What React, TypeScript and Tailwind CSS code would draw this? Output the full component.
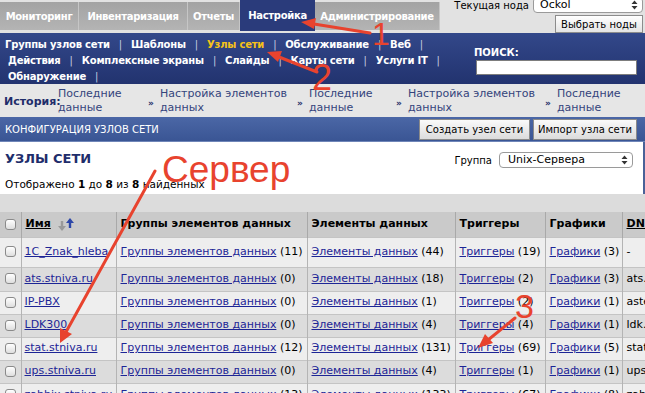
const tabs = [
  { label: 'Мониторинг', w: 'w-[79px]', active: false },
  { label: 'Инвентаризация', w: 'w-[109px]', active: false },
  { label: 'Отчеты', w: 'w-[52px]', active: false },
  { label: 'Настройка', w: 'w-[75px]', active: true },
  { label: 'Администрирование', w: 'w-[125px]', active: false },
];

const menuRows = [
  { pad: 'pl-0', items: ['Группы узлов сети', 'Шаблоны', 'Узлы сети', 'Обслуживание', 'Веб'] },
  { pad: 'pl-[3px]', items: ['Действия', 'Комплексные экраны', 'Слайды', 'Карты сети', 'Услуги IT'] },
  { pad: 'pl-[3px]', items: ['Обнаружение'] },
];

const crumbs = [
  { text: 'Последние данные', w: 'w-[90px]', first: true },
  { text: 'Настройка элементов данных', w: 'w-[149px]', first: false },
  { text: 'Последние данные', w: 'w-[99px]', first: false },
  { text: 'Настройка элементов данных', w: 'w-[149px]', first: false },
  { text: 'Последние данные', w: 'w-[90px]', first: false },
];

const hosts = [
  { name: '1C_Znak_hleba', g: 11, i: 44, t: 19, gr: 3, dns: '-', h: 'h-[30px]' },
  { name: 'ats.stniva.ru', g: 0, i: 18, t: 2, gr: 3, dns: 'ats.stniva.ru', h: 'h-[24px]' },
  { name: 'IP-PBX', g: 0, i: 1, t: 2, gr: 1, dns: 'asterisk', h: 'h-[23px]' },
  { name: 'LDK300', g: 0, i: 4, t: 4, gr: 1, dns: 'ldk.stniva.ru', h: 'h-[23px]' },
  { name: 'stat.stniva.ru', g: 12, i: 131, t: 69, gr: 5, dns: 'stat.stniva.ru', h: 'h-[23px]' },
  { name: 'ups.stniva.ru', g: 0, i: 4, t: 1, gr: 1, dns: 'ups.stniva.ru', h: 'h-[23px]' },
  { name: 'zabbix.stniva.ru', g: 13, i: 133, t: 67, gr: 8, dns: 'zabbix', h: 'h-[23px]' },
];

function UpDown() {
  return (
    <svg width="7" height="10" viewBox="0 0 7 10">
      <path d="M3.5 0.5L6.5 4H0.5z M3.5 9.5L0.5 6h6z" fill="#333" />
    </svg>
  );
}

function Checkbox() {
  return (
    <span className="inline-block w-[11px] h-[11px] rounded-[3px] border border-[#8a8a8a] bg-linear-to-b from-white to-[#dedede] align-middle" />
  );
}

function Link({ children }: { children: React.ReactNode }) {
  return <span className="text-[#1d2596] underline">{children}</span>;
}

function Annotations() {
  const c = '#e8432e';
  return (
    <svg className="absolute inset-0 pointer-events-none" width="645" height="393" viewBox="0 0 645 393">
      <g stroke={c} strokeWidth="3" strokeLinecap="round" fill="none">
        <line x1="370" y1="33" x2="314" y2="24" />
        <line x1="317" y1="72" x2="279" y2="57" />
        <line x1="515" y1="318" x2="488" y2="340" />
        <line x1="155" y1="171" x2="66" y2="332" />
      </g>
      <g fill={c}>
        <polygon points="301,22 316,18 314,29" />
        <polygon points="267,52 282,51 278,62" />
        <polygon points="478,348 485,334 493,343" />
        <polygon points="60,343 60,328 72,334" />
      </g>
      <g fill={c} fontFamily="'Liberation Sans', Arial, sans-serif">
        <text x="372" y="45" fontSize="32">1</text>
        <text x="312" y="90" fontSize="36">2</text>
        <text x="515" y="318" fontSize="34">3</text>
        <text x="162" y="182" fontSize="37">Сервер</text>
      </g>
    </svg>
  );
}

export default function App() {
  return (
    <div className="relative w-[645px] h-[393px] overflow-hidden bg-[#e2e2e2] font-['DejaVu_Sans',sans-serif] text-[11px] text-black">
      {/* main menu */}
      <div className="flex h-[33px]">
        <div className="flex items-start">
          {tabs.map((t) =>
            t.active ? (
              <div key={t.label} className={`${t.w} h-[31px] flex items-center justify-center bg-[#2a3b7b] text-white font-bold text-[10px] tracking-[-0.3px]`}>
                {t.label}
              </div>
            ) : (
              <div key={t.label} className={`${t.w} mt-[2px] h-[28px] flex items-center justify-center bg-linear-to-b from-[#a3a3a3] to-[#b4b4b4] border-r border-[#c6c6c6] text-white font-bold text-[10px] tracking-[-0.3px] whitespace-nowrap`}>
                {t.label}
              </div>
            )
          )}
        </div>
        <div className="ml-auto flex flex-col items-end pr-[2px]">
          <div className="flex items-center h-[16px] -mt-[3px]">
            <span className="mr-[4px] text-[10px]">Текущая нода</span>
            <div className="flex items-center justify-between w-[110px] h-[16px] pl-[6px] pr-[4px] rounded-[4px] border border-[#9a9a9a] bg-white">
              Ockol <UpDown />
            </div>
          </div>
          <button className="relative z-10 mt-[2px] h-[20px] w-[88px] border border-[#8c8c8c] bg-linear-to-b from-white to-[#e4e4e4] text-[10px] whitespace-nowrap">
            Выбрать ноды
          </button>
        </div>
      </div>

      {/* sub menu */}
      <div className="flex h-[51px] bg-linear-to-b from-[#33488a] to-[#22336f] text-white font-bold text-[10px]">
        <div className="flex flex-col pl-[5px] pt-[4px] tracking-[-0.2px]">
          {menuRows.map((r, ri) => (
            <div key={ri} className={`flex items-center h-[16px] ${r.pad}`}>
              {r.items.map((it) => (
                <span key={it} className="flex items-center">
                  <span className={it === 'Узлы сети' ? 'text-[#f5c218]' : ''}>{it}</span>
                  <span className="mx-[9px] font-normal text-[#c8cce0]">|</span>
                </span>
              ))}
            </div>
          ))}
        </div>
        <div className="ml-auto mr-[8px] pt-[13px] flex flex-col">
          <span className="h-[13px] leading-[13px]">ПОИСК:</span>
          <div className="mt-[1px] ml-[2px] w-[161px] h-[15px] bg-white border border-[#7d7d7d]" />
        </div>
      </div>

      {/* history */}
      <div className="flex items-center h-[33px] bg-[#e6e6e6] pl-[4px] text-[#34447c]">
        <span className="w-[54px] pt-[4px] font-bold text-[#1f2d6a]">История:</span>
        {crumbs.map((c, i) => (
          <div key={i} className={`${c.w} flex items-center shrink-0`}>
            {!c.first && <span className="w-[12px] shrink-0 pt-[6px] text-[9px] font-bold text-[#1f2d6a]">»</span>}
            <span className="leading-[14px]">{c.text}</span>
          </div>
        ))}
      </div>

      {/* config header */}
      <div className="flex items-center h-[25px] bg-linear-to-b from-[#4b67a6] to-[#3a5594] border-b border-[#6f86b8] pl-[5px] text-white">
        <span className="text-[10px]">КОНФИГУРАЦИЯ УЗЛОВ СЕТИ</span>
        <div className="ml-auto mr-[8px] flex gap-[3px]">
          <button className="w-[111px] h-[21px] border border-[#8a8a8a] bg-linear-to-b from-[#fafafa] to-[#dcdcdc] text-black text-[10px] whitespace-nowrap">
            Создать узел сети
          </button>
          <button className="w-[104px] h-[21px] border border-[#8a8a8a] bg-linear-to-b from-[#fafafa] to-[#dcdcdc] text-black text-[10px] whitespace-nowrap">
            Импорт узла сети
          </button>
        </div>
      </div>

      {/* hosts title box */}
      <div className="h-[52px] bg-white border-r-2 border-[#4a6298] px-[5px]">
        <div className="flex items-start justify-between pt-[9px]">
          <span className="text-[13px] font-bold text-[#1e2d6b] leading-[16px]">УЗЛЫ СЕТИ</span>
          <div className="flex items-center mr-[5px] mt-[1px]">
            <span className="mr-[7px] text-[10px]">Группа</span>
            <div className="flex items-center justify-between w-[134px] h-[16px] pl-[8px] pr-[4px] rounded-[4px] border border-[#9a9a9a] bg-white">
              Unix-Сервера <UpDown />
            </div>
          </div>
        </div>
        <div className="mt-[9px] text-[10.5px]">
          Отображено <b>1</b> до <b>8</b> из <b>8</b> найденных
        </div>
      </div>

      <div className="h-[18px] bg-[#dcdcdc]" />

      {/* table */}
      <table className="w-[702px] table-fixed border-collapse">
        <colgroup>
          <col className="w-[21px]" />
          <col className="w-[95px]" />
          <col className="w-[191px]" />
          <col className="w-[148px]" />
          <col className="w-[90px]" />
          <col className="w-[77px]" />
          <col className="w-[80px]" />
        </colgroup>
        <thead>
          <tr className="h-[25px] bg-[#cacaca] font-bold text-left">
            <th className="text-center"><Checkbox /></th>
            <th className="px-[4px] border-l border-[#a9a9a9]">
              <span className="flex items-center">
                <span className="underline">Имя</span>
                <svg className="ml-[6px]" width="18" height="15" viewBox="0 0 18 15">
                  <path d="M5 4v6" stroke="#9a9a9a" strokeWidth="2.4" />
                  <path d="M1 9h8l-4 5z" fill="#9a9a9a" />
                  <path d="M13 5v6" stroke="#2d47a8" strokeWidth="2.4" />
                  <path d="M9 6h8l-4-5z" fill="#2d47a8" />
                </svg>
              </span>
            </th>
            <th className="px-[4px] border-l border-[#a9a9a9] whitespace-nowrap">Группы элементов данных</th>
            <th className="px-[4px] border-l border-[#a9a9a9] whitespace-nowrap">Элементы данных</th>
            <th className="px-[4px] border-l border-[#a9a9a9]">Триггеры</th>
            <th className="px-[4px] border-l border-[#a9a9a9]">Графики</th>
            <th className="px-[4px] border-l border-[#a9a9a9]"><span className="underline">DNS</span></th>
          </tr>
        </thead>
        <tbody>
          {hosts.map((h, i) => (
            <tr key={h.name} className={`${h.h} ${i % 2 === 0 ? 'bg-[#eeeeee]' : 'bg-[#dcdcdc]'} border-t border-[#c4c4c4] whitespace-nowrap`}>
              <td className="text-center"><Checkbox /></td>
              <td className="px-[3px] border-l border-[#b4b4b4] overflow-hidden"><Link>{h.name}</Link></td>
              <td className="px-[4px] border-l border-[#b4b4b4]"><Link>Группы элементов данных</Link> ({h.g})</td>
              <td className="px-[4px] border-l border-[#b4b4b4]"><Link>Элементы данных</Link> ({h.i})</td>
              <td className="px-[4px] border-l border-[#b4b4b4]"><Link>Триггеры</Link> ({h.t})</td>
              <td className="px-[4px] border-l border-[#b4b4b4]"><Link>Графики</Link> ({h.gr})</td>
              <td className="px-[4px] border-l border-[#b4b4b4] overflow-hidden">{h.dns}</td>
            </tr>
          ))}
        </tbody>
      </table>

      <Annotations />
    </div>
  );
}
